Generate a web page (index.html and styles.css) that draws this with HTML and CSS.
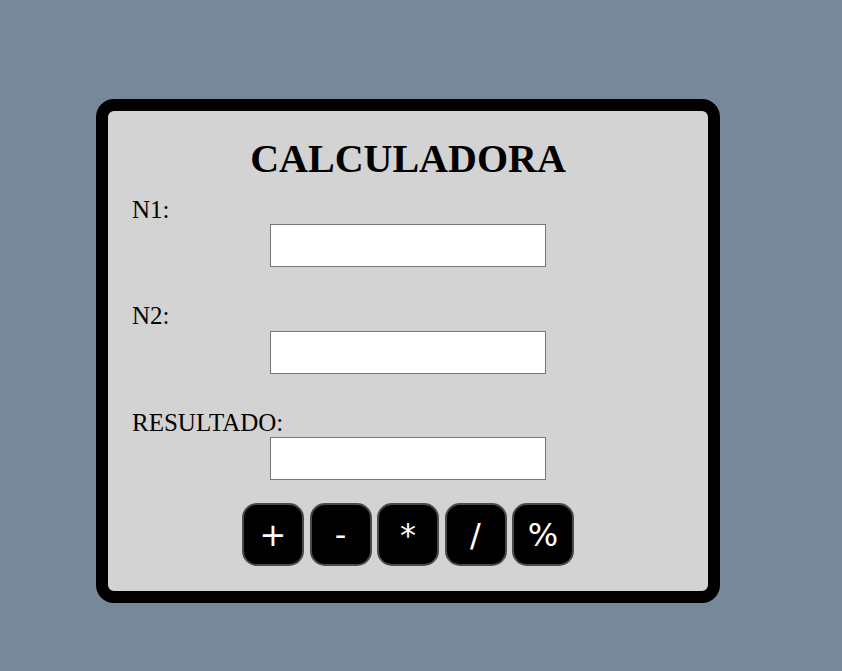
FILE: index.html
```html
<!DOCTYPE html>
<html lang="pt">
<head>
<meta charset="utf-8">
<title>Calculadora</title>
<link rel="stylesheet" href="styles.css">
</head>
<body>
<div class="card">
  <h1 class="title">CALCULADORA</h1>
  <div class="field">
    <label class="label" for="n1">N1:</label>
    <input class="input" id="n1" type="text">
  </div>
  <div class="field">
    <label class="label" for="n2">N2:</label>
    <input class="input" id="n2" type="text">
  </div>
  <div class="field field-last">
    <label class="label" for="res">RESULTADO:</label>
    <input class="input" id="res" type="text">
  </div>
  <div class="buttons">
    <button class="btn">+</button>
    <button class="btn">-</button>
    <button class="btn">*</button>
    <button class="btn">/</button>
    <button class="btn">%</button>
  </div>
</div>
</body>
</html>
```
FILE: styles.css
```css
html, body {
  margin: 0;
  padding: 0;
  background: #778899;
  height: 100%;
}
body {
  padding-top: 99px;
  padding-left: 96px;
  box-sizing: border-box;
  font-family: "Liberation Serif", "Times New Roman", serif;
}
.card {
  width: 552px;
  border: 12px solid #000;
  border-radius: 18px;
  background: #d3d3d3;
  padding: 25px 24px 25px;
}
.title {
  margin: 0 0 13.5px;
  text-align: center;
  font-size: 40px;
  line-height: 46px;
  font-weight: bold;
}
.field {
  margin-bottom: 35px;
}
.field-last {
  margin-bottom: 23px;
}
.label {
  display: block;
  font-size: 25px;
  line-height: 28.5px;
}
.input {
  display: block;
  margin: 0 auto;
  width: 276px;
  height: 43px;
  box-sizing: border-box;
  border: 1px solid #767676;
  background: #fff;
  padding: 0 4px;
}
.buttons {
  display: flex;
  justify-content: center;
  gap: 5.5px;
}
.btn {
  width: 62px;
  height: 63px;
  box-sizing: border-box;
  background: #000;
  color: #fff;
  border: 2px solid #4a4a4a;
  border-radius: 15px;
  font-family: "DejaVu Sans", sans-serif;
  font-size: 32px;
  padding: 0;
}
```
